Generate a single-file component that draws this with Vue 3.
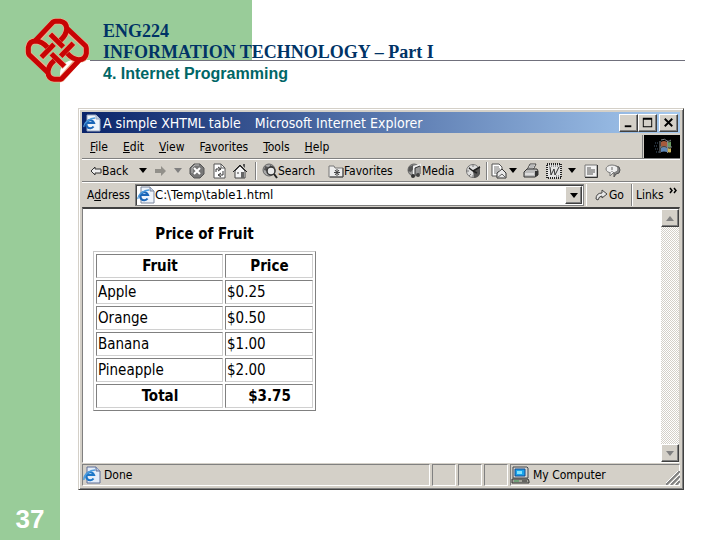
<script setup>
import { ref } from 'vue'

const address = ref('C:\\Temp\\table1.html')
const menus = ['File', 'Edit', 'View', 'Favorites', 'Tools', 'Help']
const menuKey = { Favorites: 1 }
const rows = [
  { fruit: 'Apple', price: '$0.25' },
  { fruit: 'Orange', price: '$0.50' },
  { fruit: 'Banana', price: '$1.00' },
  { fruit: 'Pineapple', price: '$2.00' },
]
const quarterTurns = [0, 90, 180, 270]
</script>

<template>
  <div class="slide">
    <header class="banner">
      <svg class="logo" viewBox="14 25 195 195" aria-hidden="true">
        <g v-for="a in quarterTurns" :key="a" :transform="`rotate(${a} 111 122)`" fill="none" stroke="#f0b090" stroke-width="19" stroke-linejoin="round">
          <path d="M48 94 L98 37 Q102 35 106 35 H120 Q139 38 139 58 Q138 76 122 90" />
          <path d="M89 73 L129 112" />
        </g>
        <g v-for="a in quarterTurns" :key="'r' + a" :transform="`rotate(${a} 111 122)`" fill="none" stroke="#c80404" stroke-width="15" stroke-linejoin="round">
          <path d="M44 94 L98 37 Q102 35 106 35 H120 Q139 38 139 58 Q138 76 120 92" />
          <path d="M90 74 L129 112" />
        </g>
      </svg>
      <h1>ENG224<br>INFORMATION TECHNOLOGY – Part I</h1>
    </header>

    <aside class="rail"><span class="page">37</span></aside>

    <main class="body">
      <div class="rule"></div>
      <h2>4. Internet Programming</h2>

      <section class="window">
        <div class="titlebar">
          <svg class="ie" viewBox="0 0 18 18"><path d="M4 1h9l4 4v12H4z" fill="#eef4fc" stroke="#99a6bd" /><path d="M13 1v4h4" fill="#c5d2e6" stroke="#99a6bd" /><path d="M10.500 12.500A4 4 0 1 1 11 9H4" fill="none" stroke="#1b66b8" stroke-width="2.200" /><path d="M1 13C0 9 7 4 12 4" fill="none" stroke="#4c9bdd" stroke-width="1.300" /></svg>
          <div class="caption-text"><span>A simple XHTML table</span><span>Microsoft Internet Explorer</span></div>
          <div class="controls">
            <button class="raised" aria-label="Minimize"><svg viewBox="0 0 16 16"><path d="M4 11h7v2H4z" /></svg></button>
            <button class="raised" aria-label="Maximize"><svg viewBox="0 0 16 16"><path d="M3 3h10v10H3zM4 5v7h8V5z" fill-rule="evenodd" /></svg></button>
            <button class="raised last" aria-label="Close"><svg viewBox="0 0 16 16"><path d="M4 4l8 8M12 4l-8 8" stroke="#000" stroke-width="2" /></svg></button>
          </div>
        </div>

        <div class="menubar">
          <nav>
            <button v-for="m in menus" :key="m">{{ m.slice(0, menuKey[m] || 0) }}<u>{{ m[menuKey[m] || 0] }}</u>{{ m.slice((menuKey[m] || 0) + 1) }}</button>
          </nav>
          <div class="throbber">
            <svg viewBox="0 0 35 23"><path d="M17 7q3-2 6 0v5q-3-2-6 0z" fill="#a65a3c" /><path d="M24 7q2 1 3-1v6q-1 1-3 0z" fill="#699a61" /><path d="M17 13q3-2 6 0v4q-3-1-6 0z" fill="#5d87b8" /><path d="M24 13q2 1 3 0v4q-1 1-3 0z" fill="#c9b35c" /><path d="M16 6v12M23.500 6v12M16 12h12M17 5q4-2 6 1 2 1 4-1" fill="none" stroke="#85888b" /><path d="M11 8h3M10 11h4M11 14h3M12 17h3" stroke="#465d75" stroke-dasharray="1 1" /></svg>
          </div>
        </div>

        <div class="toolbar">
          <button class="text-tool"><svg class="arrow" viewBox="0 0 12 12"><path d="M5 2v2h6v4H5v2L1 6z" fill="#eee" stroke="#333" /></svg>Back</button>
          <button aria-label="Back history"><i class="caret"></i></button>
          <button aria-label="Forward"><svg class="arrow" viewBox="0 0 12 12"><path d="M7 1v3H1v4h6v3l5-5z" fill="#92908a" /></svg></button>
          <button aria-label="Forward history"><i class="caret dim"></i></button>
          <button aria-label="Stop"><svg viewBox="0 0 16 16"><path d="M5 1h6l4 4v6l-4 4H5l-4-4V5z" fill="#777" stroke="#555" /><path d="M3 10V5l3-3h4" fill="none" stroke="#bbb" /><path d="M5 5l6 6M11 5l-6 6" stroke="#fff" stroke-width="2" /></svg></button>
          <button aria-label="Refresh"><svg viewBox="0 0 16 16"><path d="M3 1h7l4 4v10H3z" fill="#fff" stroke="#555" /><path d="M10 1v4h4" fill="none" stroke="#555" /><path d="M5 9V6h4M7 4l3 2-3 2M12 8v4H8M10 10l-3 2 3 2" fill="none" stroke="#333" /></svg></button>
          <button aria-label="Home"><svg viewBox="0 0 16 16"><path d="M11 3V1h2v4" fill="#555" /><path d="M3 8v7h10V8L8 3z" fill="#f4f4f4" stroke="#444" /><path d="M1 9l7-7 7 7" fill="none" stroke="#222" /><path d="M9 9h3v6H9z" fill="#666" /><path d="M5 9h2v2H5z" fill="#999" /></svg></button>
          <i class="sep"></i>
          <button class="text-tool inset"><svg viewBox="0 0 16 16"><circle cx="7" cy="7" r="6" fill="#aaa" stroke="#666" /><path d="M3 3l3 1-1 4-3-1zM8 2l4 2-1 2-3-1z" fill="#555" /><circle cx="9" cy="8" r="4" fill="#e8e8e8" stroke="#333" stroke-width="1.500" /><path d="M12 11l3 4" stroke="#222" stroke-width="2" /></svg>Search</button>
          <button class="text-tool inset"><svg viewBox="0 0 16 16"><path d="M1 14V3h5l1 2h8v9z" fill="#eee" stroke="#777" /><path d="M2 14h13V5" fill="none" stroke="#444" /><path d="M9 6v7M6 9.500h6M7 7l4 5M11 7l-4 5" stroke="#444" /></svg>Favorites</button>
          <button class="text-tool inset"><svg viewBox="0 0 16 16"><circle cx="8" cy="7" r="6" fill="#999" stroke="#666" /><path d="M3 4l4-2 1 3-3 4-3-1z" fill="#555" /><path d="M8 12V4l6-2v9" fill="none" stroke="#eee" stroke-width="2" /><path d="M9 12V5l5-2v8" fill="none" stroke="#333" /><ellipse cx="7" cy="13" rx="2" ry="2" fill="#333" /><ellipse cx="12" cy="12" rx="2" ry="2" fill="#444" /></svg>Media</button>
          <button aria-label="History"><svg viewBox="0 0 16 16"><circle cx="8" cy="8" r="6.500" fill="#ddd" stroke="#777" /><path d="M8 8l7-5v8q-2 4-6 4z" fill="#555" /><path d="M8 8l7-4M8 8l4 2M8 8L4 5" stroke="#222" stroke-width="1.500" /><path d="M3 3l2 2M8 1v3M1 8h3M4 13l2-2M8 12v3" stroke="#777" /></svg></button>
          <i class="sep"></i>
          <button aria-label="Mail"><svg viewBox="0 0 16 16"><path d="M1 1h7l3 3v9H1z" fill="#fff" stroke="#555" /><path d="M3 4h5M3 6h6M3 8h5M3 10h3" stroke="#777" /><path d="M6 10l5-4 4 4v5H6z" fill="#e8e8e8" stroke="#333" /><path d="M6 15l5-4 4 4" fill="none" stroke="#666" /></svg></button>
          <button aria-label="Mail options"><i class="caret"></i></button>
          <button aria-label="Print"><svg viewBox="0 0 16 16"><path d="M4 7l3-6h6l-3 6z" fill="#fff" stroke="#444" /><path d="M7 3h4M6 5h4" stroke="#777" /><path d="M1 9l3-3h10l1 2v4l-3 2H1z" fill="#bbb" stroke="#333" /><path d="M12 8v6l3-2V8z" fill="#333" /><path d="M2 11h9" stroke="#fff" /></svg></button>
          <button aria-label="Edit with Word"><svg viewBox="0 0 16 16"><path d="M1 1h14v14H1z" fill="#e4e4e4" stroke="#222" stroke-width="2" stroke-dasharray="1 1" /><path d="M4 4l1 8 3-6 1 6 4-8" fill="none" stroke="#333" /><path d="M3 3h11M10 13h3" stroke="#555" stroke-dasharray="1 1" /></svg></button>
          <button aria-label="Edit options"><i class="caret"></i></button>
          <button aria-label="Discuss page"><svg viewBox="0 0 16 16"><path d="M2 2h12v12H2z" fill="#f2f2f2" stroke="#777" /><path d="M2 14.500h12.500V2" fill="none" stroke="#333" /><path d="M4 5h4M4 7h8M4 9h8M4 11h6" stroke="#555" /></svg></button>
          <button aria-label="Messenger"><svg viewBox="0 0 16 16"><path d="M11 3q4 0 4 4t-4 4l-2 3V3z" fill="#888" stroke="#555" /><ellipse cx="7" cy="6" rx="6" ry="4" fill="#eee" stroke="#777" /><path d="M5 9v4l4-4" fill="#eee" stroke="#777" /><path d="M7 4v3M7 8v1" stroke="#666" /></svg></button>
        </div>

        <div class="addressbar">
          <label for="url">A<u>d</u>dress</label>
          <div class="combo">
            <svg class="ie" viewBox="0 0 18 18"><path d="M4 1h9l4 4v12H4z" fill="#eef4fc" stroke="#7a869c" /><path d="M13 1v4h4" fill="#c5d2e6" stroke="#7a869c" /><path d="M10.500 12.500A4 4 0 1 1 11 9H4" fill="none" stroke="#1b66b8" stroke-width="2.200" /><path d="M1 13C0 9 7 4 12 4" fill="none" stroke="#4c9bdd" stroke-width="1.300" /></svg>
            <input id="url" v-model="address" type="text">
            <button class="raised" aria-label="Show addresses"><i class="caret"></i></button>
          </div>
          <button class="go"><svg viewBox="0 0 14 14"><path d="M1 11Q1 5 7 5V2l5 4-5 4V8Q4 8 3 12z" fill="#e6e6e6" stroke="#444" /></svg>Go</button>
          <button class="links">Links <svg viewBox="0 0 9 7"><path d="M1 1l2 2.500L1 6M5 1l2 2.500L5 6" fill="none" stroke="#000" stroke-width="1.500" /></svg></button>
        </div>

        <div class="viewport">
          <div class="document">
            <table>
              <caption>Price of Fruit</caption>
              <thead><tr><th>Fruit</th><th>Price</th></tr></thead>
              <tbody><tr v-for="r in rows" :key="r.fruit"><td>{{ r.fruit }}</td><td>{{ r.price }}</td></tr></tbody>
              <tfoot><tr><th>Total</th><th>$3.75</th></tr></tfoot>
            </table>
          </div>
          <div class="scrollbar">
            <button class="raised" aria-label="Scroll up"><i class="caret dim up"></i></button>
            <button class="raised" aria-label="Scroll down"><i class="caret dim"></i></button>
          </div>
        </div>

        <footer class="status">
          <div class="pane grow">
            <svg class="ie" viewBox="0 0 18 18"><path d="M4 1h9l4 4v12H4z" fill="#e3edfa" stroke="#5f6f96" /><path d="M13 1v4h4" fill="#b5c6e4" stroke="#5f6f96" /><path d="M10.500 12.500A4 4 0 1 1 11 9H4" fill="none" stroke="#1b76c8" stroke-width="2.200" /><path d="M1 14C0 9 7 4 12 4" fill="none" stroke="#4c9bdd" stroke-width="1.500" /></svg>
            Done
          </div>
          <div class="pane"></div>
          <div class="pane"></div>
          <div class="pane"></div>
          <div class="pane zone">
            <svg class="pc" viewBox="0 0 19 18"><path d="M2 1h14l1 1v10H2z" fill="#d6d6d0" stroke="#44464c" /><path d="M4 3h10v7H4z" fill="#19a3ea" stroke="#174a92" /><path d="M6 5h5v3H6z" fill="#82e2fc" /><path d="M1 13h16l1 2v2H1z" fill="#a5a59c" stroke="#333" /><path d="M3 15h5" stroke="#3b9b55" /><path d="M11 15h5" stroke="#222" /></svg>
            My Computer
          </div>
          <svg class="grip" viewBox="0 0 14 14"><path d="M0 14L14 0M5 14l9-9M10 14l4-4" stroke="#808080" stroke-width="2" /><path d="M-1 13L13-1M3 14L14 3M8 14l6-6" stroke="#fff" /></svg>
        </footer>
      </section>
    </main>
  </div>
</template>

<style>
body { margin: 0; }
</style>

<style scoped>
* { box-sizing: border-box; }
svg { display: block; flex: none; }
button { font: inherit; color: inherit; background: none; border: 0; padding: 0; margin: 0; }
.slide {
  min-height: 100vh;
  display: grid;
  grid-template-columns: 60px minmax(0, 1fr);
  grid-template-rows: 60px 1fr;
  background: #99cc99;
}
.banner {
  grid-column: 1 / -1;
  position: relative;
  background: linear-gradient(to right, #99cc99 35%, #fff 35%);
  padding: 21px 0 0 103px;
}
.logo { position: absolute; left: 25px; top: 18px; width: 65px; height: 65px; }
h1 { margin: 0; font: bold 18px/21px "Liberation Serif", serif; color: #003366; }
h2 { margin: 0 0 0 43px; padding: 3px 0 25px; font: bold 16px/19px "Liberation Sans", sans-serif; color: #006666; }
.rail { display: flex; align-items: flex-end; justify-content: center; padding-bottom: 6px; }
.page { font: bold 26px/30px "Liberation Sans", sans-serif; color: #fff; }
.body { background: #fff; border-top-left-radius: 14px; display: flex; flex-direction: column; min-width: 0; }
.rule { height: 1px; margin: 0 35px 0 30px; background: #70707c; }

.window {
  flex: 1;
  display: flex;
  flex-direction: column;
  margin: 0 36px 50px 18px;
  padding: 3px;
  background: #d4d0c8;
  border: 1px solid;
  border-color: #d4d0c8 #404040 #404040 #d4d0c8;
  box-shadow: inset 1px 1px #fff, inset -1px -1px #808080;
  font: 12px/16px "DejaVu Sans Condensed", "DejaVu Sans", sans-serif;
  color: #000;
}
.titlebar {
  display: flex;
  align-items: center;
  height: 21px;
  padding: 0 2px 0 1px;
  background: linear-gradient(to right, #0a246a, #a6caf0);
  color: #fff;
  font-size: 14px;
}
.ie { width: 18px; height: 18px; }
.caption-text { flex: 1; display: flex; gap: 14px; padding-left: 2px; white-space: nowrap; }
.controls { display: flex; }
.controls button { width: 19px; height: 18px; }
.controls .last { margin-left: 2px; }
.controls svg { width: 15px; height: 15px; }
.raised {
  display: flex;
  align-items: center;
  justify-content: center;
  background: #d4d0c8;
  border: 1px solid;
  border-color: #fff #404040 #404040 #fff;
  box-shadow: inset -1px -1px #808080;
}
.menubar { display: flex; height: 24px; margin-top: 2px; border-bottom: 1px solid #808080; }
.menubar nav { flex: 1; display: flex; align-items: center; gap: 15px; padding-left: 8px; border-right: 1px solid #808080; }
.throbber { background: #000; width: 36px; margin-left: 1px; }
.throbber svg { width: 35px; height: 23px; }
.toolbar {
  display: grid;
  grid-template-columns: 48px 10px 24px 12px 26px 18px 24px 8px 66px 78px 58px 22px 6px 18px 10px 26px 20px 16px 22px 22px;
  align-items: center;
  height: 23px;
  padding-left: 8px;
  border-top: 1px solid #fff;
  border-bottom: 1px solid #808080;
}
.toolbar button { display: flex; align-items: center; justify-content: center; height: 20px; }
.toolbar .text-tool { justify-content: flex-start; white-space: nowrap; }
.toolbar .inset { padding-left: 2px; }
.toolbar svg { width: 16px; height: 16px; }
.toolbar .arrow { width: 12px; height: 12px; }
.sep { justify-self: center; width: 2px; height: 18px; border-left: 1px solid #808080; border-right: 1px solid #fff; }
.caret { width: 0; height: 0; border: 4px solid transparent; border-top: 5px solid #000; border-bottom: 0; }
.caret.dim { border-top-color: #808080; }
.caret.up { border-top: 0; border-bottom: 5px solid #808080; }
.addressbar { display: flex; align-items: center; height: 25px; padding-left: 5px; border-top: 1px solid #fff; }
.addressbar label { width: 48px; }
.combo {
  flex: 1;
  display: flex;
  align-items: center;
  height: 22px;
  padding: 1px;
  background: #fff;
  border: 1px solid #808080;
  box-shadow: inset 1px 1px #404040;
}
.combo input { flex: 1; min-width: 0; border: 0; outline: 0; padding: 0; background: none; font: inherit; font-size: 13px; }
.combo .raised { width: 17px; height: 18px; }
.go { display: flex; align-items: center; width: 46px; height: 22px; margin-left: 2px; padding-left: 8px; border-left: 1px solid #fff; border-right: 1px solid #808080; }
.go svg { width: 14px; height: 14px; }
.links { display: flex; width: 48px; height: 22px; padding: 3px 0 0 3px; gap: 5px; border-left: 1px solid #fff; }
.links svg { width: 9px; height: 7px; }
.viewport { flex: 1; display: flex; background: #fff; border: 1px solid #808080; border-top: 2px solid #404040; border-right-color: #d4d0c8; border-bottom-color: #fff; }
.document { flex: 1; padding: 15px 10px; font-size: 15px; line-height: 18px; }
table { border: 1px solid; border-color: #c8c8c8 #808080 #808080 #c8c8c8; border-spacing: 2px; width: 223px; }
caption { font-weight: bold; padding: 1px 0 8px; }
th, td { border: 1px solid; border-color: #808080 #d0d0d0 #d0d0d0 #808080; padding: 2px 0 2px 1px; text-align: left; height: 24px; }
th { text-align: center; }
th:first-child { width: 127px; }
.scrollbar {
  width: 18px;
  display: flex;
  flex-direction: column;
  justify-content: space-between;
  background: repeating-conic-gradient(#fff 0 25%, #d4d0c8 0 50%) 0 0 / 2px 2px;
}
.scrollbar .raised { height: 18px; }
.status { display: flex; gap: 2px; height: 22px; margin-top: 1px; position: relative; }
.pane { width: 24px; display: flex; align-items: center; gap: 3px; border: 1px solid; border-color: #808080 #fff #fff #808080; white-space: nowrap; }
.pane.grow { flex: 1; }
.pane.zone { width: 170px; }
.pc { width: 19px; height: 18px; }
.grip { position: absolute; right: 0; bottom: 1px; width: 14px; height: 14px; }
</style>
